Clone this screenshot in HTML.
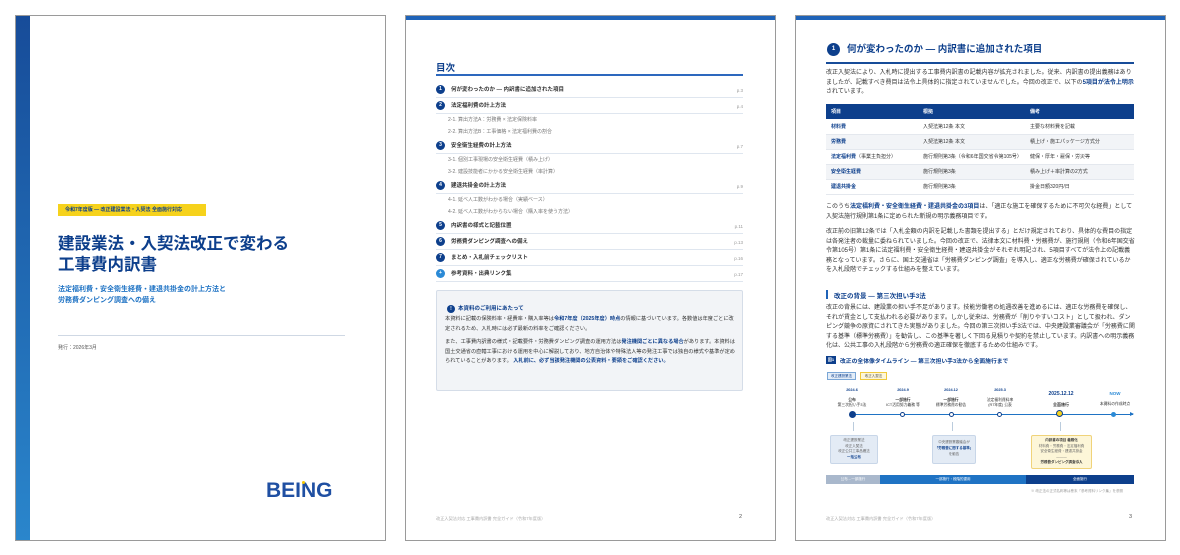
<!DOCTYPE html>
<html><head><meta charset="utf-8"><style>
*{margin:0;padding:0;box-sizing:border-box}
body{width:1180px;height:555px;background:#fff;position:relative;overflow:hidden;font-family:"Liberation Sans","Noto Sans CJK JP",sans-serif;color:#333}
.pg{position:absolute;top:15px;width:371px;height:526px;border:1px solid #9a9a9a;background:#fff;overflow:hidden}
.a{position:absolute;white-space:nowrap}
.nb{color:#0d3f8c;font-weight:bold}
.c{display:inline-block;border-radius:50%;background:#0d3f8c;color:#fff;text-align:center;font-weight:bold}
.toc{position:absolute;left:30px;width:307px;height:15px;border-bottom:1px solid #dfe6ef;font-size:5.5px;font-weight:bold;color:#333;line-height:15px}
.toc .c{width:9px;height:9px;font-size:5px;line-height:9px;margin-right:6px;vertical-align:middle}
.toc .p{position:absolute;right:0;top:0;color:#999;font-weight:normal;font-size:4.5px}
.sub{position:absolute;left:42px;font-size:5px;color:#777}
.p3{position:absolute;left:30px;width:310px;font-size:6px;line-height:9.6px;color:#333;white-space:normal}
.p3 b{line-height:9.6px}
table{border-collapse:collapse;font-size:5px}
td{height:15px;padding-left:5px;border-bottom:1px solid #e4e8ee}
</style></head><body>

<!-- PAGE 1 -->
<div class="pg" style="left:15px">
 <div style="position:absolute;left:0;top:0;width:14px;height:526px;background:linear-gradient(#174c99,#2a86cc)"></div>
 <div class="a" style="left:42px;top:188px;width:148px;height:12px;background:#f6d21c;font-size:5px;font-weight:bold;color:#0d3f8c;line-height:12px;padding-left:7px">令和7年度版 ― 改正建設業法・入契法 全面施行対応</div>
 <div class="a" style="left:42px;top:218px;font-size:16.5px;font-weight:bold;color:#0d3f8c;line-height:21px">建設業法・入契法改正で変わる<br>工事費内訳書</div>
 <div class="a" style="left:42px;top:268px;font-size:7px;font-weight:bold;color:#1f73c4;line-height:11px">法定福利費・安全衛生経費・建退共掛金の計上方法と<br>労務費ダンピング調査への備え</div>
 <div class="a" style="left:42px;top:319px;width:287px;height:1px;background:#cfd8e4"></div>
 <div class="a" style="left:42px;top:328px;font-size:5px;color:#555">発行：2026年3月</div>
 <div class="a" style="left:250px;top:463px;font-size:21px;font-weight:bold;color:#1f4fa2">BEING</div>
 <div class="a" style="left:286px;top:465px;width:3px;height:3px;border-radius:50%;background:#f6c800"></div>
</div>

<!-- PAGE 2 -->
<div class="pg" style="left:405px">
 <div style="position:absolute;left:0;top:0;width:371px;height:4px;background:#1f63b8"></div>
 <div class="a" style="left:30px;top:44px;font-size:9.5px;font-weight:bold;color:#0d3f8c">目次</div>
 <div class="a" style="left:30px;top:58px;width:307px;height:1.5px;background:#2d68be"></div>
 <div class="toc" style="top:67px"><span class="c">1</span>何が変わったのか ― 内訳書に追加された項目<span class="p">p.3</span></div>
 <div class="toc" style="top:83px"><span class="c">2</span>法定福利費の計上方法<span class="p">p.4</span></div>
 <div class="sub" style="top:100px">2-1. 算出方法A：労務費 × 法定保険料率</div>
 <div class="sub" style="top:112px">2-2. 算出方法B：工事価格 × 法定福利費の割合</div>
 <div class="toc" style="top:123px"><span class="c">3</span>安全衛生経費の計上方法<span class="p">p.7</span></div>
 <div class="sub" style="top:140px">3-1. 個別工事現場の安全衛生経費（積み上げ）</div>
 <div class="sub" style="top:152px">3-2. 建設技能者にかかる安全衛生経費（率計算）</div>
 <div class="toc" style="top:163px"><span class="c">4</span>建退共掛金の計上方法<span class="p">p.9</span></div>
 <div class="sub" style="top:180px">4-1. 延べ人工数がわかる場合（実績ベース）</div>
 <div class="sub" style="top:192px">4-2. 延べ人工数がわからない場合（購入率を使う方法）</div>
 <div class="toc" style="top:203px"><span class="c">5</span>内訳書の様式と記載位置<span class="p">p.11</span></div>
 <div class="toc" style="top:219px"><span class="c">6</span>労務費ダンピング調査への備え<span class="p">p.13</span></div>
 <div class="toc" style="top:235px"><span class="c">7</span>まとめ・入札前チェックリスト<span class="p">p.16</span></div>
 <div class="toc" style="top:251px"><span class="c" style="background:#2b8ad6">+</span>参考資料・出典リンク集<span class="p">p.17</span></div>
 <div class="a" style="left:30px;top:274px;width:307px;height:101px;background:#f2f4f7;border:1px solid #d5dde8;border-radius:2px"></div>
 <div class="a" style="left:41px;top:288px;font-size:5.5px;font-weight:bold;color:#0d3f8c"><span class="c" style="width:8px;height:8px;font-size:5px;line-height:8px;vertical-align:middle;margin-right:3px">!</span>本資料のご利用にあたって</div>
 <div class="a" style="left:39px;top:299px;font-size:5.2px;line-height:9.5px;color:#333;white-space:normal;width:290px">本資料に記載の保険料率・経費率・購入率等は<b class="nb">令和7年度（2025年度）時点</b>の情報に基づいています。各数値は年度ごとに改定されるため、入札時には必ず最新の料率をご確認ください。</div>
 <div class="a" style="left:39px;top:322px;font-size:5.2px;line-height:9.5px;color:#333;white-space:normal;width:290px">また、工事費内訳書の様式・記載要件・労務費ダンピング調査の運用方法は<b class="nb">発注機関ごとに異なる場合</b>があります。本資料は国土交通省の直轄工事における運用を中心に解説しており、地方自治体や特殊法人等の発注工事では独自の様式や基準が定められていることがあります。 <b class="nb">入札前に、必ず当該発注機関の公表資料・要領をご確認ください。</b></div>
 <div class="a" style="left:30px;top:500px;font-size:4.2px;color:#aaa">改正入契法対応 工事費内訳書 完全ガイド（令和7年度版）</div>
 <div class="a" style="left:333px;top:498px;font-size:5.5px;color:#555">2</div>
</div>

<!-- PAGE 3 -->
<div class="pg" style="left:795px">
 <div style="position:absolute;left:0;top:0;width:371px;height:4px;background:#1f63b8"></div>
 <div class="a" style="left:31px;top:27px;font-size:9.5px;font-weight:bold;color:#0d3f8c;line-height:14px"><span class="c" style="width:13px;height:13px;font-size:6px;line-height:13px;vertical-align:middle;margin-right:7px">1</span>何が変わったのか ― 内訳書に追加された項目</div>
 <div class="a" style="left:30px;top:46px;width:308px;height:1.5px;background:#174c99"></div>
 <div class="p3" style="top:53px">改正入契法により、入札時に提出する工事費内訳書の記載内容が拡充されました。従来、内訳書の提出義務はありましたが、記載すべき費目は法令上具体的に指定されていませんでした。今回の改正で、以下の<b class="nb">5項目が法令上明示</b>されています。</div>
 <table class="a" style="left:30px;top:88px;width:308px">
  <tr style="background:#0d3f8c;color:#fff;font-weight:bold"><td style="width:92px;border:0">項目</td><td style="width:107px;border:0">根拠</td><td style="border:0">備考</td></tr>
  <tr><td class="nb">材料費</td><td>入契法第12条 本文</td><td>主要な材料費を記載</td></tr>
  <tr style="background:#f2f4f7"><td class="nb">労務費</td><td>入契法第12条 本文</td><td>積上げ・施工パッケージ方式分</td></tr>
  <tr><td><b class="nb">法定福利費</b>（事業主負担分）</td><td>施行規則第3条（令和6年国交省令第105号）</td><td>健保・厚年・雇保・労災等</td></tr>
  <tr style="background:#f2f4f7"><td class="nb">安全衛生経費</td><td>施行規則第3条</td><td>積み上げ＋率計算の2方式</td></tr>
  <tr><td class="nb">建退共掛金</td><td>施行規則第3条</td><td>掛金日額320円/日</td></tr>
 </table>
 <div class="p3" style="top:187px">このうち<b class="nb">法定福利費・安全衛生経費・建退共掛金の3項目</b>は、「適正な施工を確保するために不可欠な経費」として入契法施行規則第1条に定められた新規の明示義務項目です。</div>
 <div class="p3" style="top:212px">改正前の旧第12条では「入札金額の内訳を記載した書類を提出する」とだけ規定されており、具体的な費目の指定は各発注者の裁量に委ねられていました。今回の改正で、法律本文に材料費・労務費が、施行規則（令和6年国交省令第105号）第1条に法定福利費・安全衛生経費・建退共掛金がそれぞれ明記され、5項目すべてが法令上の記載義務となっています。さらに、国土交通省は「労務費ダンピング調査」を導入し、適正な労務費が確保されているかを入札段階でチェックする仕組みを整えています。</div>
 <div class="a" style="left:30px;top:274px;width:2px;height:9px;background:#1f63b8"></div>
 <div class="a" style="left:38px;top:274px;font-size:6.5px;font-weight:bold;color:#0d3f8c">改正の背景 ― 第三次担い手3法</div>
 <div class="p3" style="top:288px">改正の背景には、建設業の担い手不足があります。技能労働者の処遇改善を進めるには、適正な労務費を確保し、それが賃金として支払われる必要があります。しかし従来は、労務費が「削りやすいコスト」として扱われ、ダンピング競争の原資にされてきた実態がありました。今回の第三次担い手3法では、中央建設業審議会が「労務費に関する基準（標準労務費）」を勧告し、この基準を著しく下回る見積りや契約を禁止しています。内訳書への明示義務化は、公共工事の入札段階から労務費の適正確保を徹底するための仕組みです。</div>
 <div class="a" style="left:30px;top:340px;width:10px;height:8px;background:#0d3f8c;color:#fff;font-size:4px;font-weight:bold;text-align:center;line-height:8px">図1</div>
 <div class="a" style="left:44px;top:340px;font-size:5.8px;font-weight:bold;color:#0d3f8c">改正の全体像タイムライン ― 第三次担い手3法から全面施行まで</div>
 <div class="a" style="left:31px;top:356px;width:29px;height:8px;border:1px solid #7aa6d6;background:#e3edf8;font-size:3.5px;text-align:center;line-height:6px;color:#0d3f8c">改正建設業法</div>
 <div class="a" style="left:64px;top:356px;width:27px;height:8px;border:1px solid #f0c93a;background:#fdf6d8;font-size:3.5px;text-align:center;line-height:6px;color:#555">改正入契法</div>
 <div class="a" style="left:57px;top:398px;width:280px;height:1px;background:#1f73c4"></div>
 <div class="a" style="left:334px;top:396px;width:0;height:0;border-left:4px solid #1f73c4;border-top:2.5px solid transparent;border-bottom:2.5px solid transparent"></div>
 <div class="a" style="left:53px;top:395px;width:7px;height:7px;border-radius:50%;background:#0d3f8c"></div>
 <div class="a" style="left:104px;top:396px;width:5px;height:5px;border-radius:50%;border:1px solid #0d3f8c;background:#fff"></div>
 <div class="a" style="left:153px;top:396px;width:5px;height:5px;border-radius:50%;border:1px solid #0d3f8c;background:#fff"></div>
 <div class="a" style="left:201px;top:396px;width:5px;height:5px;border-radius:50%;border:1px solid #0d3f8c;background:#fff"></div>
 <div class="a" style="left:260px;top:394px;width:7px;height:7px;border-radius:50%;border:1.5px solid #0d3f8c;background:#f6d21c"></div>
 <div class="a" style="left:315px;top:396px;width:5px;height:5px;border-radius:50%;background:#2b8ad6"></div>
 <div class="a" style="left:36px;top:372px;width:40px;text-align:center;font-size:3.8px;line-height:5px;color:#333"><b class="nb">2024.6</b><br><br><b>公布</b><br>第三次担い手3法</div>
 <div class="a" style="left:85px;top:372px;width:44px;text-align:center;font-size:3.8px;line-height:5px;color:#333"><b class="nb">2024.9</b><br><br><b>一部施行</b><br>ICT活用努力義務 等</div>
 <div class="a" style="left:133px;top:372px;width:44px;text-align:center;font-size:3.8px;line-height:5px;color:#333"><b class="nb">2024.12</b><br><br><b>一部施行</b><br>標準労務費の勧告</div>
 <div class="a" style="left:182px;top:372px;width:44px;text-align:center;font-size:3.8px;line-height:5px;color:#333"><b class="nb">2025.3</b><br><br>法定福利費料率<br>(R7年度) 公表</div>
 <div class="a" style="left:240px;top:375px;width:50px;text-align:center;font-size:4px;line-height:5px;color:#333"><b class="nb" style="font-size:5px">2025.12.12</b><br><br><b>全面施行</b></div>
 <div class="a" style="left:295px;top:375px;width:48px;text-align:center;font-size:3.8px;line-height:5px;color:#333"><b style="color:#2b8ad6;font-size:4.5px">NOW</b><br><br>本資料の作成時点</div>
 <div class="a" style="left:57px;top:406px;width:1px;height:9px;background:#bcd"></div>
 <div class="a" style="left:156px;top:406px;width:1px;height:9px;background:#bcd"></div>
 <div class="a" style="left:264px;top:406px;width:1px;height:9px;background:#bcd"></div>
 <div class="a" style="left:34px;top:419px;width:48px;height:29px;background:#e3ebf5;border:1px solid #c8d6e8;border-radius:2px;font-size:3.5px;line-height:5.5px;text-align:center;padding-top:2px;color:#666">改正建設業法<br>改正入契法<br>改正公共工事品確法<br><b class="nb">一括公布</b></div>
 <div class="a" style="left:136px;top:419px;width:44px;height:29px;background:#e3ebf5;border:1px solid #c8d6e8;border-radius:2px;font-size:3.5px;line-height:6px;text-align:center;padding-top:3px;color:#666">中央建設業審議会が<br><b class="nb">「労務費に関する基準」</b><br>を勧告</div>
 <div class="a" style="left:235px;top:419px;width:61px;height:34px;background:#fdf6d8;border:1px solid #f0d37a;border-radius:2px;font-size:3.5px;line-height:5.5px;text-align:center;padding-top:2px;color:#666"><b style="color:#333">内訳書の項目 義務化</b><br>材料費・労務費・法定福利費<br>安全衛生経費・建退共掛金<br>―――<br><b style="color:#333">労務費ダンピング調査導入</b></div>
 <div class="a" style="left:30px;top:459px;width:54px;height:9px;background:#a9b8cc;color:#fff;font-size:3.5px;text-align:center;line-height:9px">公布→一部施行</div>
 <div class="a" style="left:84px;top:459px;width:146px;height:9px;background:#1f73c4;color:#fff;font-size:3.5px;text-align:center;line-height:9px">一部施行・段階的運用</div>
 <div class="a" style="left:230px;top:459px;width:108px;height:9px;background:#0d3f8c;color:#fff;font-size:3.5px;text-align:center;line-height:9px">全面施行</div>
 <div class="a" style="left:235px;top:473px;font-size:3.5px;color:#999">※ 改正法の正式名称等は巻末「参考資料リンク集」を参照</div>
 <div class="a" style="left:30px;top:500px;font-size:4.2px;color:#aaa">改正入契法対応 工事費内訳書 完全ガイド（令和7年度版）</div>
 <div class="a" style="left:333px;top:498px;font-size:5.5px;color:#555">3</div>
</div>
</body></html>
